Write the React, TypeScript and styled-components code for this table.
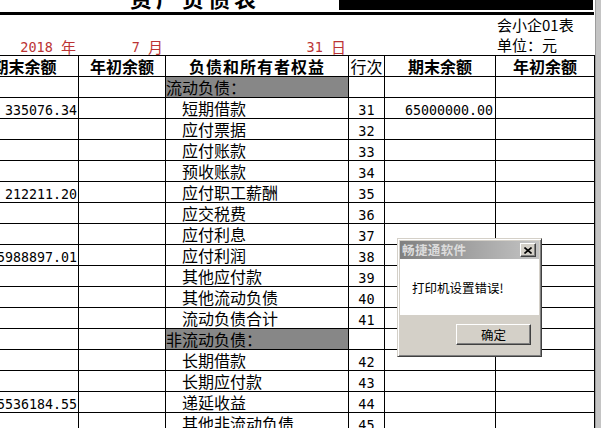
import React from "react";
import styled, { createGlobalStyle } from "styled-components";

const Global = createGlobalStyle`
  html, body { margin: 0; padding: 0; background: #fff; }
  body {
    width: 601px; height: 428px; overflow: hidden;
    font-family: "Noto Sans CJK SC", sans-serif; color: #000;
  }
`;

const COLS = "108px 87px 183px 36px 111px 99px";
const CJK = `"Noto Sans CJK SC", sans-serif`;
const MONO = `"DejaVu Sans Mono", "Liberation Mono", monospace`;

const Screen = styled.div`
  position: relative;
  width: 601px;
  height: 428px;
  display: flex;
  overflow: hidden;
  background: #fff;
`;

const Viewport = styled.div`
  width: 595px;
  flex: none;
  overflow: hidden;
  display: flex;
  flex-direction: column;
`;

const ScrollEdge = styled.div`
  flex: 1;
  background: #c4c4c4;
  border-left: 1px solid #9c9c9c;
`;

const TitleBand = styled.div`
  height: 12px;
  flex: none;
  display: flex;
  overflow: hidden;
`;

const Title = styled.div`
  margin-left: 130px;
  align-self: flex-end;
  margin-bottom: 4px;
  font-family: ${CJK};
  font-size: 22px;
  line-height: 22px;
  font-weight: 700;
  letter-spacing: 4px;
  white-space: nowrap;
`;

const BlackBox = styled.div`
  margin-left: auto;
  margin-right: 2px;
  width: 254px;
  height: 10px;
  background: #000;
  border-left: 1px solid #fff;
  align-self: flex-start;
`;

const Rule = styled.div`
  height: 3px;
  flex: none;
  background: #000;
  margin-right: 1px;
`;

const InfoGrid = styled.div`
  display: grid;
  grid-template-columns: ${COLS};
  grid-template-rows: 20px 20px;
  margin-left: -29px;
  flex: none;
`;

const Stamp = styled.div<{ $row: number }>`
  grid-column: 6;
  grid-row: ${(p) => p.$row};
  font-family: ${CJK};
  font-size: 15px;
  line-height: 20px;
  padding-left: 1px;
  white-space: nowrap;
`;

const DateCell = styled.div<{ $col: number }>`
  grid-column: ${(p) => p.$col};
  grid-row: 2;
  display: flex;
  justify-content: flex-end;
  align-items: flex-end;
  padding-right: 3px;
  color: #bb3434;
  line-height: 16px;
  white-space: pre;
`;

const DateNum = styled.span`
  font-family: ${MONO};
  font-size: 13.5px;
  white-space: pre;
`;

const DateUnit = styled.span`
  font-family: ${CJK};
  font-size: 15px;
`;

const Table = styled.div`
  display: grid;
  grid-template-columns: ${COLS};
  grid-auto-rows: 21px;
  margin-left: -29px;
  border-top: 1px solid #000;
  flex: none;
`;

const BaseCell = styled.div`
  box-sizing: border-box;
  border-right: 1px solid #000;
  border-bottom: 1px solid #000;
  overflow: hidden;
  white-space: nowrap;
`;

const HeadCell = styled(BaseCell)<{ $bold?: boolean; $spacing?: number }>`
  font-family: ${CJK};
  font-size: 16px;
  line-height: 20px;
  font-weight: ${(p) => (p.$bold ? 700 : 400)};
  letter-spacing: ${(p) => p.$spacing ?? 0}px;
  text-align: center;
`;

const ItemCell = styled(BaseCell)<{ $section?: boolean }>`
  font-family: ${CJK};
  font-size: 16px;
  line-height: 20px;
  padding-left: ${(p) => (p.$section ? 0 : 16)}px;
  background: ${(p) => (p.$section ? "#878787" : "#fff")};
`;

const AmountCell = styled(BaseCell)<{ $pad: number }>`
  font-family: ${MONO};
  font-size: 13.3px;
  line-height: 25px;
  text-align: right;
  padding-right: ${(p) => p.$pad}px;
`;

const SeqCell = styled(BaseCell)`
  font-family: ${MONO};
  font-size: 13.5px;
  line-height: 25px;
  text-align: center;
`;

/* ---------- dialog ---------- */

const Dialog = styled.div`
  position: absolute;
  left: 397px;
  top: 238px;
  width: 145px;
  height: 119px;
  box-sizing: border-box;
  background: #d4d0c8;
  border: 1px solid;
  border-color: #d4d0c8 #404040 #404040 #d4d0c8;
  padding: 2px;
  box-shadow: inset 1px 1px 0 #fff, inset -1px -1px 0 #808080;
  display: flex;
  flex-direction: column;
  font-family: ${CJK};
  font-size: 12px;
`;

const TitleBar = styled.div`
  height: 18px;
  flex: none;
  display: flex;
  align-items: center;
  padding: 0 3px 0 2px;
  background: linear-gradient(to right, #808080, #c4c4c4);
`;

const DialogTitle = styled.span`
  color: #dcdcdc;
  font-weight: 700;
  font-size: 12.5px;
  letter-spacing: 0.4px;
  line-height: 14px;
`;

const CloseBtn = styled.div`
  margin-left: auto;
  width: 16px;
  height: 14px;
  box-sizing: border-box;
  background: #d4d0c8;
  border: 1px solid;
  border-color: #fff #404040 #404040 #fff;
  box-shadow: inset -1px -1px 0 #808080;
  display: grid;
  place-items: center;
`;

const DialogBody = styled.div`
  height: 56px;
  flex: none;
  background: #fff;
  display: flex;
  align-items: center;
  padding-left: 12px;
  font-size: 12.5px;
  color: #000;
`;

const DialogFooter = styled.div`
  flex: 1;
  display: flex;
  justify-content: flex-end;
  align-items: flex-start;
  padding: 9px 8px 0 0;
`;

const OkButton = styled.div`
  width: 75px;
  height: 21px;
  box-sizing: border-box;
  background: #d4d0c8;
  border: 1px solid;
  border-color: #fff #404040 #404040 #fff;
  box-shadow: inset -1px -1px 0 #808080;
  display: grid;
  place-items: center;
  font-size: 12.5px;
  color: #000;
`;

type Row = {
  left?: string;
  item: string;
  section?: boolean;
  seq?: string;
  end?: string;
};

const rows: Row[] = [
  { item: "流动负债：", section: true },
  { left: "335076.34", item: "短期借款", seq: "31", end: "65000000.00" },
  { item: "应付票据", seq: "32" },
  { item: "应付账款", seq: "33" },
  { item: "预收账款", seq: "34" },
  { left: "212211.20", item: "应付职工薪酬", seq: "35" },
  { item: "应交税费", seq: "36" },
  { item: "应付利息", seq: "37" },
  { left: "5988897.01", item: "应付利润", seq: "38" },
  { item: "其他应付款", seq: "39" },
  { item: "其他流动负债", seq: "40" },
  { item: "流动负债合计", seq: "41" },
  { item: "非流动负债：", section: true },
  { item: "长期借款", seq: "42" },
  { item: "长期应付款", seq: "43" },
  { left: "5536184.55", item: "递延收益", seq: "44" },
  { item: "其他非流动负债", seq: "45" },
];

export default function App() {
  return (
    <>
      <Global />
      <Screen>
        <Viewport>
          <TitleBand>
            <Title>资产负债表</Title>
            <BlackBox />
          </TitleBand>
          <Rule />
          <InfoGrid>
            <Stamp $row={1}>会小企01表</Stamp>
            <DateCell $col={1}>
              <DateNum>{"2018 "}</DateNum>
              <DateUnit>年</DateUnit>
            </DateCell>
            <DateCell $col={2}>
              <DateNum>{"7 "}</DateNum>
              <DateUnit>月</DateUnit>
            </DateCell>
            <DateCell $col={3}>
              <DateNum>{"31 "}</DateNum>
              <DateUnit>日</DateUnit>
            </DateCell>
            <Stamp $row={2}>单位：元</Stamp>
          </InfoGrid>
          <Table>
            <HeadCell $bold>期末余额</HeadCell>
            <HeadCell $bold>年初余额</HeadCell>
            <HeadCell $bold $spacing={1}>负债和所有者权益</HeadCell>
            <HeadCell>行次</HeadCell>
            <HeadCell $bold>期末余额</HeadCell>
            <HeadCell $bold>年初余额</HeadCell>
            {rows.map((r, i) => (
              <React.Fragment key={i}>
                <AmountCell $pad={1}>{r.left ?? ""}</AmountCell>
                <AmountCell $pad={1} />
                <ItemCell $section={r.section}>{r.item}</ItemCell>
                <SeqCell>{r.seq ?? ""}</SeqCell>
                <AmountCell $pad={2}>{r.end ?? ""}</AmountCell>
                <AmountCell $pad={2} />
              </React.Fragment>
            ))}
          </Table>
        </Viewport>
        <ScrollEdge />
        <Dialog>
          <TitleBar>
            <DialogTitle>畅捷通软件</DialogTitle>
            <CloseBtn>
              <svg width="8" height="7" viewBox="0 0 8 7">
                <path d="M0.5 0.5 L7.5 6.5 M7.5 0.5 L0.5 6.5" stroke="#000" strokeWidth="1.6" fill="none" />
              </svg>
            </CloseBtn>
          </TitleBar>
          <DialogBody>打印机设置错误!</DialogBody>
          <DialogFooter>
            <OkButton>确定</OkButton>
          </DialogFooter>
        </Dialog>
      </Screen>
    </>
  );
}
